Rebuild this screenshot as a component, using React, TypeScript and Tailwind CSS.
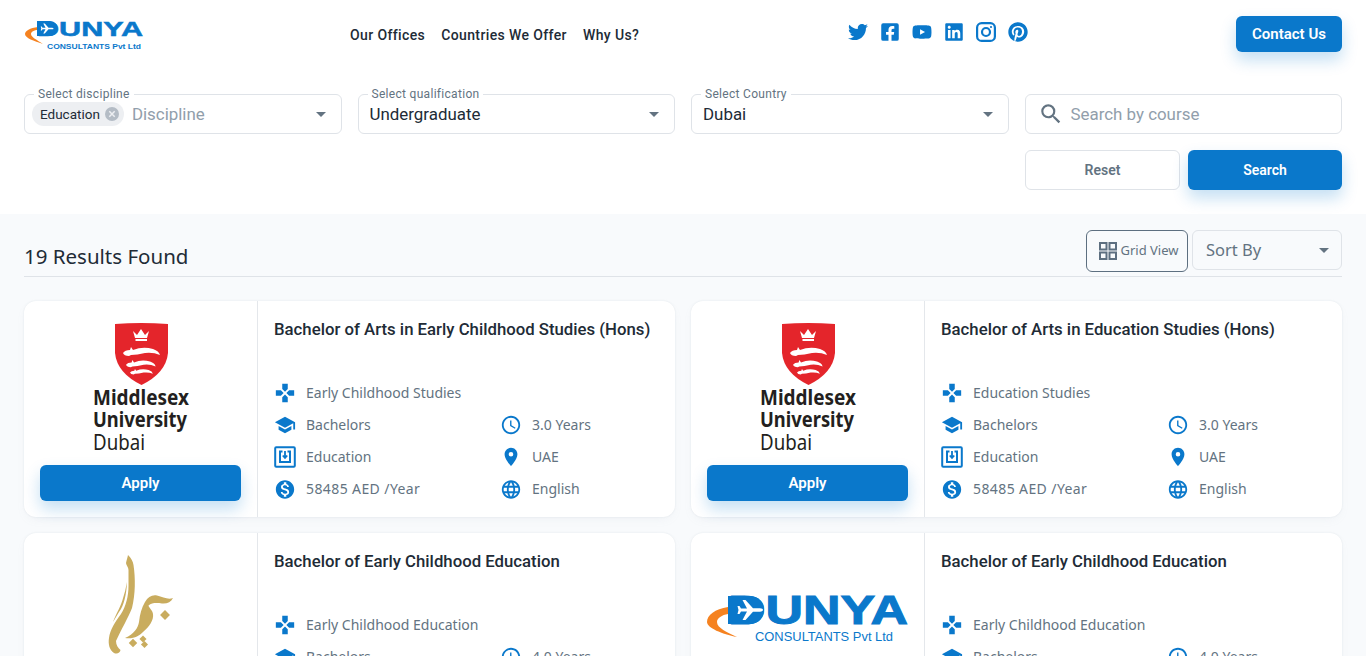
import { FaFacebookSquare, FaLinkedin, FaPinterest, FaTwitter, FaYoutube } from "react-icons/fa";
import { MdAccessTime, MdGames, MdLanguage, MdLocationOn, MdMonetizationOn, MdSchool, MdSearch } from "react-icons/md";

const body = "font-['Noto_Sans',sans-serif]";
const sword = "M30 30 Q32 27 37 27 L38 24 L40 27 Q50 23 60 26 Q66 28 67 32 Q60 29 52 30 Q44 32 38 32 L36 33 Q31 33 30 30 Z";

function Plane({ x, y, s }: { x: number; y: number; s: number }) {
  return (
    <path
      transform={`translate(${x} ${y}) scale(${s})`}
      fill="#fff"
      d="M0 -1.5 H6 L1.5 -10 H4.5 L12 -1.7 H19 C23 -1.7 23 1.7 19 1.7 H12 L4.5 10 H1.5 L6 1.5 H0 L-1.5 4 H-3.5 L-2.5 0 L-3.5 -4 H-1.5 Z"
    />
  );
}

function DunyaHeader() {
  return (
    <svg width="118" height="30" viewBox="0 0 118 30" className="overflow-visible">
      <path d="M13 7 C5 8 0 11 0 14 C0 18 9 21 18 24 C12 20 6 17 6 14 C6 12 9 10 13 10 Z" fill="#f58220" />
      <text x="12" y="16" fontFamily="Liberation Sans" fontWeight="700" fontSize="21" fill="#0a78cb" stroke="#0a78cb" strokeWidth="0.5" textLength="106" lengthAdjust="spacingAndGlyphs">
        DUNYA
      </text>
      <path d="M12 1 H25 C30 1 32.5 5 32.5 8.5 C32.5 12 30 16 25 16 H12 Z" fill="#0a78cb" />
      <Plane x={17.5} y={8.5} s={0.5} />
      <text x="22" y="29" fontFamily="Liberation Sans" fontWeight="700" fontSize="7.5" fill="#0a78cb" textLength="94" lengthAdjust="spacingAndGlyphs">
        CONSULTANTS Pvt Ltd
      </text>
    </svg>
  );
}

function DunyaLarge() {
  return (
    <svg width="201" height="50" viewBox="0 0 201 50" className="mt-[46px] overflow-visible">
      <path d="M21 12 C8 14 0 20 0 27 C0 33 15 39 30 42 C20 37 10 33 10 27 C10 23 15 20 21 19 Z" fill="#f58220" />
      <text x="21" y="29" fontFamily="Liberation Sans" fontWeight="700" fontSize="40" fill="#0a78cb" stroke="#0a78cb" strokeWidth="1" textLength="180" lengthAdjust="spacingAndGlyphs">
        DUNYA
      </text>
      <path d="M21 1 H43 C52 1 57 8 57 15 C57 22 52 29 43 29 H21 Z" fill="#0a78cb" />
      <Plane x={34} y={15} s={1} />
      <text x="48" y="46" fontFamily="Liberation Sans" fontSize="13" fill="#0a78cb" textLength="138" lengthAdjust="spacingAndGlyphs">
        CONSULTANTS Pvt Ltd
      </text>
    </svg>
  );
}

function Middlesex() {
  return (
    <svg width="96" height="132" viewBox="0 0 96 132" className="mt-[6px] overflow-visible">
      <path d="M22 1 Q48 -1 75 1 L75 30 Q73 50 48.5 62 Q24 50 22 30 Z" fill="#e4252b" />
      <path d="M40 8 L44 12 L48 6 L52 12 L56 8 L54 15 H42 Z M42.5 16 H54 V18 H42.5 Z" fill="#fff" />
      <path d={sword} fill="#fff" />
      <path d={sword} fill="#fff" transform="translate(9 17.8) scale(0.8)" />
      <path d={sword} fill="#fff" transform="translate(18.4 31) scale(0.62)" />
      <g fontFamily="Noto Sans" fill="#231f20">
        <text x="0" y="82" fontSize="21" fontWeight="700" textLength="96" lengthAdjust="spacingAndGlyphs">Middlesex</text>
        <text x="0" y="104" fontSize="21" fontWeight="700" textLength="94" lengthAdjust="spacingAndGlyphs">University</text>
        <text x="0" y="127" fontSize="21" textLength="52" lengthAdjust="spacingAndGlyphs">Dubai</text>
      </g>
    </svg>
  );
}

function JumeiraMark() {
  return (
    <svg width="72" height="104" viewBox="0 0 72 104" className="mt-[3px]">
      <g fill="#c9ac5e">
        <path d="M23 3 C26 6 28 9 28.5 13 C30.5 26 30.5 42 27 56 C24 64 16 78 11 89 C11 93 13 96 15.5 98 C15 101 12 102.5 9 101 C4.5 98 3 92 4 86 C5 78 10 70 16 62 C21 54 23.5 44 23.5 34 L23.5 18 C23.5 15 21 13 21 11 C21.5 8 22.5 6 23 3 Z" />
        <path d="M22 30 C21.5 42 19 54 14 60 L8 70 C10 64 15 56 17.5 48 C19.5 42 21 36 22 30 Z" />
        <path d="M68 46 C63 48 58 45 52 43.5 C47 42.5 43 45 40 50 C36.5 56 35 62 34 70 C33 76 29 82 20 86 C28 87.5 34 84 38 80 C44 75 49 68 48 62 C47.5 58 44 56 43.5 53.5 C47 50.5 52 51 57 51.5 C62 52 66 50 68 46 Z" />
        <rect x="56.5" y="59.5" width="7" height="7" transform="rotate(45 60 63)" />
        <rect x="35.5" y="84.5" width="5" height="5" transform="rotate(45 38 87)" />
        <rect x="25" y="88" width="6" height="6" transform="rotate(45 28 91)" />
        <rect x="37" y="90" width="5" height="5" transform="rotate(45 39.5 92.5)" />
      </g>
    </svg>
  );
}

function EducationIcon() {
  return (
    <svg width="22" height="22" viewBox="0 0 22 22" fill="none" stroke="#0a78cb">
      <rect x="1.2" y="1.2" width="19.6" height="19.6" rx="1" strokeWidth="2" />
      <path d="M8.5 5.5 H6 V16 H16 V5.5 H13.5" strokeWidth="2" />
      <path d="M11 5 V11 M8.8 9.5 L11 12 L13.2 9.5" strokeWidth="1.8" />
    </svg>
  );
}

function InstagramIcon() {
  return (
    <svg width="20" height="20" viewBox="0 0 20 20" fill="none" stroke="#0a78cb">
      <rect x="1.1" y="1.1" width="17.8" height="17.8" rx="4.5" strokeWidth="2.2" />
      <circle cx="10" cy="10" r="4" strokeWidth="2.2" />
      <circle cx="15" cy="5" r="1.1" fill="#0a78cb" stroke="none" />
    </svg>
  );
}

function GridIcon() {
  return (
    <svg width="18" height="18" viewBox="0 0 18 18" fill="none" stroke="#5d6f80" strokeWidth="2">
      <rect x="1" y="1" width="6.5" height="6.5" />
      <rect x="10.5" y="1" width="6.5" height="6.5" />
      <rect x="1" y="10.5" width="6.5" height="6.5" />
      <rect x="10.5" y="10.5" width="6.5" height="6.5" />
    </svg>
  );
}

function Caret() {
  return <span className="h-0 w-0 border-x-[5px] border-t-[5px] border-x-transparent border-t-[#637381]" />;
}

function Select({ label, value, chip }: { label: string; value: string; chip?: string }) {
  return (
    <div className="relative flex h-10 items-center rounded-md border border-[#dfe3e8] bg-white pl-[7px] pr-[15px]">
      <span className="absolute -top-[8px] left-[9px] bg-white px-[4px] font-['Roboto',sans-serif] text-[12px] leading-[14px] tracking-[0.3px] text-[#637381]">
        {label}
      </span>
      {chip ? (
        <>
          <span className="flex h-6 items-center gap-1 rounded-full bg-[#edeff2] pl-2 pr-1 font-['Roboto',sans-serif] text-[13.5px] text-[#212b36]">
            {chip}
            <svg width="16" height="16" viewBox="0 0 16 16">
              <circle cx="8" cy="8" r="7" fill="#b4bcc5" />
              <path d="M5.3 5.3 L10.7 10.7 M10.7 5.3 L5.3 10.7" stroke="#edeff2" strokeWidth="1.5" />
            </svg>
          </span>
          <span className="ml-2 flex-1 pt-px font-['Roboto',sans-serif] text-[16.9px] text-[#919eab]">Discipline</span>
        </>
      ) : (
        <span className="flex-1 pl-1 pt-px font-['Roboto',sans-serif] text-[16.9px] text-[#212b36]">{value}</span>
      )}
      <Caret />
    </div>
  );
}

type Course = {
  title: string;
  area: string;
  fee: string;
  years: string;
  place: string;
  lang: string;
  logo: "mdx" | "jumeira" | "dunya";
};

const courses: Course[] = [
  { title: "Bachelor of Arts in Early Childhood Studies (Hons)", area: "Early Childhood Studies", fee: "58485 AED /Year", years: "3.0 Years", place: "UAE", lang: "English", logo: "mdx" },
  { title: "Bachelor of Arts in Education Studies (Hons)", area: "Education Studies", fee: "58485 AED /Year", years: "3.0 Years", place: "UAE", lang: "English", logo: "mdx" },
  { title: "Bachelor of Early Childhood Education", area: "Early Childhood Education", fee: "46000 AED /Year", years: "4.0 Years", place: "UAE", lang: "English", logo: "jumeira" },
  { title: "Bachelor of Early Childhood Education", area: "Early Childhood Education", fee: "46000 AED /Year", years: "4.0 Years", place: "UAE", lang: "English", logo: "dunya" },
];

function Info({ icon, text, wide }: { icon: React.ReactNode; text: string; wide?: boolean }) {
  return (
    <div className="flex h-8 items-center">
      <span className="flex w-[22px] shrink-0 justify-center text-[#0a78cb]">{icon}</span>
      <span className={`ml-[9px] pb-[2px] pl-px text-[14px] text-[#637381] ${wide ? "tracking-[0.4px]" : ""} ${body}`}>{text}</span>
    </div>
  );
}

function CourseCard({ course }: { course: Course }) {
  return (
    <div className="flex h-[216px] rounded-xl bg-white shadow-[0_0_2px_rgba(145,158,171,0.2),0_4px_12px_-4px_rgba(145,158,171,0.12)]">
      <div className="flex w-[234px] shrink-0 flex-col border-r border-[#e4e7eb] p-4">
        <div className="flex h-[148px] justify-center">
          {course.logo === "mdx" && <Middlesex />}
          {course.logo === "jumeira" && <JumeiraMark />}
          {course.logo === "dunya" && <DunyaLarge />}
        </div>
        <button className="h-9 rounded-md bg-[#0a78cb] font-['Roboto',sans-serif] text-[15px] font-semibold text-white shadow-[0_8px_16px_rgba(10,120,203,0.24)]">
          Apply
        </button>
      </div>
      <div className="flex-1 px-4 pt-4">
        <h3 className="h-[60px] font-['Roboto',sans-serif] text-[16.75px] leading-6 font-medium text-[#212b36]">{course.title}</h3>
        <Info icon={<MdGames size={24} />} text={course.area} />
        <div className="grid grid-cols-[226px_1fr]">
          <Info icon={<MdSchool size={26} />} text="Bachelors" />
          <Info icon={<MdAccessTime size={26} />} text={course.years} />
          <Info icon={<EducationIcon />} text="Education" />
          <Info icon={<MdLocationOn size={24} />} text={course.place} />
          <Info icon={<MdMonetizationOn size={25} />} text={course.fee} wide />
          <Info icon={<MdLanguage size={25} />} text={course.lang} />
        </div>
      </div>
    </div>
  );
}

export default function App() {
  return (
    <div className="h-screen overflow-hidden bg-[#f8fafc]">
      <div className="bg-white px-6 pb-6 pt-4">
        <header className="flex h-[54px] items-start">
          <div className="w-[326px] pl-px pt-1">
            <DunyaHeader />
          </div>
          <nav className="flex w-[498px] gap-4 pt-[9px] font-['Roboto',sans-serif] text-[14px] font-medium tracking-[0.38px] text-[#212b36]">
            <a>Our Offices</a>
            <a>Countries We Offer</a>
            <a>Why Us?</a>
          </nav>
          <div className="flex items-center gap-3 pt-[6px] text-[#0a78cb]">
            <FaTwitter size={20} />
            <FaFacebookSquare size={20} />
            <FaYoutube size={20} />
            <FaLinkedin size={20} />
            <InstagramIcon />
            <FaPinterest size={20} />
          </div>
          <button className="ml-auto h-9 w-[106px] rounded-md bg-[#0a78cb] font-['Roboto',sans-serif] text-[15px] font-semibold text-white shadow-[0_8px_16px_rgba(10,120,203,0.24)]">
            Contact Us
          </button>
        </header>
        <div className="mt-6 grid grid-cols-4 gap-4">
          <Select label="Select discipline" value="" chip="Education" />
          <Select label="Select qualification" value="Undergraduate" />
          <Select label="Select Country" value="Dubai" />
          <div className="flex h-10 items-center rounded-md border border-[#dfe3e8] px-3">
            <MdSearch size={26} className="text-[#637381]" />
            <span className="ml-[7px] pt-px font-['Roboto',sans-serif] text-[16.9px] text-[#919eab]">Search by course</span>
          </div>
        </div>
        <div className="mt-4 flex justify-end gap-2">
          <button className="h-10 w-[155px] rounded-md border border-[#dfe3e8] pt-px font-['Roboto',sans-serif] text-[14px] font-semibold text-[#637381]">
            Reset
          </button>
          <button className="h-10 w-[154px] rounded-md bg-[#0a78cb] pt-px font-['Roboto',sans-serif] text-[14px] font-semibold text-white shadow-[0_8px_16px_rgba(10,120,203,0.24)]">
            Search
          </button>
        </div>
      </div>
      <main className="px-6 pt-4">
        <div className="flex h-[47px] items-start border-b border-[#dfe3e8]">
          <h2 className={`mt-[10px] text-[20.5px] leading-[32px] text-[#212b36] ${body}`}>19 Results Found</h2>
          <button className={`ml-auto flex h-[42px] w-[102px] items-center justify-center gap-[3px] rounded-md border border-[#5d6f80] pl-[4px] text-[13px] text-[#637381] ${body}`}>
            <GridIcon />
            Grid View
          </button>
          <div className={`ml-1 flex h-10 w-[150px] items-center justify-between rounded-md border border-[#dfe3e8] pl-[13px] pr-[12px] text-[16.5px] text-[#637381] ${body}`}>
            Sort By
            <Caret />
          </div>
        </div>
        <div className="mt-6 grid grid-cols-2 gap-4">
          {courses.map((course, i) => (
            <CourseCard key={i} course={course} />
          ))}
        </div>
      </main>
    </div>
  );
}
